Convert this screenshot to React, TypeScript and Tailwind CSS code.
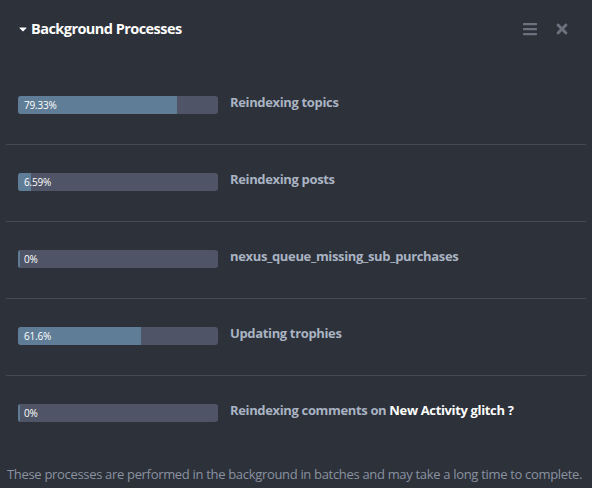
import { FaCaretDown, FaBars, FaTimes } from 'react-icons/fa';

interface Task {
  pct: number;
  label: string;
  link?: string;
}

const tasks: Task[] = [
  { pct: 79.33, label: 'Reindexing topics' },
  { pct: 6.59, label: 'Reindexing posts' },
  { pct: 0, label: 'nexus_queue_missing_sub_purchases' },
  { pct: 61.6, label: 'Updating trophies' },
  { pct: 0, label: 'Reindexing comments on ', link: 'New Activity glitch ?' },
];

function ProgressBar({ pct }: { pct: number }) {
  return (
    <div className="relative w-[200px] h-[18px] rounded-[3px] bg-[#4f5566] overflow-hidden shrink-0">
      <div
        className="absolute left-0 top-0 bottom-0 bg-[#5f7d96]"
        style={{ width: pct === 0 ? '2px' : `${pct}%` }}
      />
      <span className="relative block pl-[6px] leading-[18px] text-[10px] tracking-[-0.2px] text-white">
        {pct}%
      </span>
    </div>
  );
}

export default function App() {
  return (
    <div
      className="w-[592px] h-[488px] bg-[#2d313a] overflow-hidden"
      style={{ fontFamily: '"Open Sans", "Noto Sans", sans-serif' }}
    >
      {/* Header */}
      <div className="flex items-center justify-between h-[57px] pl-[17px] pr-[22px]">
        <h2 className="flex items-center gap-[2px] text-[14.5px] tracking-[-0.55px] font-bold text-white">
          <FaCaretDown className="text-[12px]" />
          Background Processes
        </h2>
        <div className="flex items-center gap-[16px] text-[#6b717d]">
          <FaBars className="text-[16px]" />
          <FaTimes className="text-[16px]" />
        </div>
      </div>

      {/* Tasks */}
      <div className="px-[6px] pt-[11px]">
        {tasks.map((t, i) => (
          <div
            key={i}
            className={`flex items-center gap-[12px] pl-[12px] pt-[28px] pb-[30px] ${
              i < tasks.length - 1 ? 'border-b border-[#454a56]' : ''
            }`}
          >
            <ProgressBar pct={t.pct} />
            <span className="text-[13px] tracking-[-0.35px] font-bold text-[#a9b3c2] -mt-[4px]">
              {t.label}
              {t.link && <span className="text-white">{t.link}</span>}
            </span>
          </div>
        ))}
      </div>

      {/* Footer */}
      <p className="px-[7px] pt-[13px] text-[13px] tracking-[-0.32px] whitespace-nowrap text-[#8a92a0]">
        These processes are performed in the background in batches and may take a long time to complete.
      </p>
    </div>
  );
}
